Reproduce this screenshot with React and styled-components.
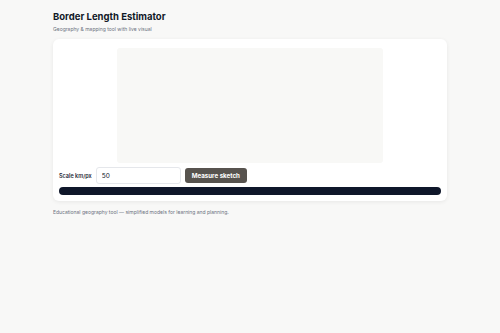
import React, { useState } from "react";
import styled, { createGlobalStyle } from "styled-components";

const Global = createGlobalStyle`
  html, body {
    margin: 0;
    background: #f8f8f7;
    font-family: Inter, "Noto Sans", sans-serif;
    color: #111827;
  }
`;

export default function App() {
  const [scale, setScale] = useState("50");

  return (
    <>
      <Global />
      <Page>
        <Title>Border Length Estimator</Title>
        <Subtitle>Geography &amp; mapping tool with live visual</Subtitle>
        <Card>
          <Canvas />
          <Controls>
            <Label htmlFor="scale">Scale km/px</Label>
            <Input
              id="scale"
              value={scale}
              onChange={(e) => setScale(e.target.value)}
            />
            <Button type="button">Measure sketch</Button>
          </Controls>
          <Progress />
        </Card>
        <Footer>
          Educational geography tool — simplified models for learning and
          planning.
        </Footer>
      </Page>
    </>
  );
}

const Page = styled.div`
  width: 394px;
  margin: 0 auto;
  padding-top: 10px;
`;

const Title = styled.h1`
  margin: 0;
  font-size: 9.5px;
  font-weight: 700;
  line-height: 13px;
  color: #111827;
`;

const Subtitle = styled.p`
  margin: 3px 0 0;
  font-size: 5px;
  line-height: 7px;
  color: #6b7280;
`;

const Card = styled.div`
  margin-top: 6px;
  background: #fff;
  border-radius: 6px;
  box-shadow: 0 1px 4px rgba(0, 0, 0, 0.07);
  padding: 9px 6px 6px;
  display: flex;
  flex-direction: column;
`;

const Canvas = styled.div`
  width: 266px;
  height: 115px;
  margin: 0 auto;
  background: #f8f8f6;
  border-radius: 3px;
`;

const Controls = styled.div`
  display: flex;
  align-items: center;
  gap: 4px;
  margin-top: 4px;
`;

const Label = styled.label`
  font-size: 5.5px;
  font-weight: 600;
  color: #1f2937;
`;

const Input = styled.input`
  box-sizing: border-box;
  width: 85px;
  height: 17px;
  padding: 0 5px;
  border: 1px solid #e5e7eb;
  border-radius: 3px;
  font-family: inherit;
  font-size: 6.5px;
  color: #111827;
  outline: none;
`;

const Button = styled.button`
  height: 15px;
  padding: 0 7px;
  border: none;
  border-radius: 3px;
  background: #57534e;
  color: #fff;
  font-family: inherit;
  font-size: 6.2px;
  font-weight: 700;
`;

const Progress = styled.div`
  margin-top: 3px;
  height: 8px;
  border-radius: 4px;
  background: #0f172a;
`;

const Footer = styled.p`
  margin: 8px 0 0;
  font-size: 5px;
  color: #6b7280;
`;
